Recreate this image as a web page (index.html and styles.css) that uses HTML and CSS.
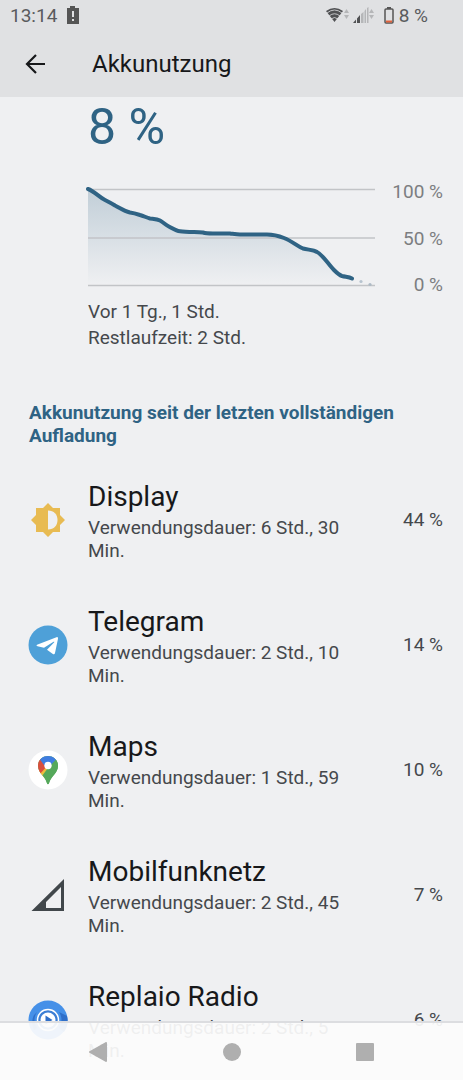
FILE: index.html
```
<!DOCTYPE html>
<html lang="de">
<head>
  <meta charset="UTF-8">
  <meta name="viewport" content="width=device-width, initial-scale=1.0">
  <title>Akkunutzung</title>
  <link rel="stylesheet" href="styles.css">
</head>
<body>
  <header class="header">
    <div class="status-bar">
      <span>13:14</span>
      <svg class="battery-alert" width="12" height="18" viewBox="0 0 12 18">
        <path d="M3 0h5v2h4v16H0V2h3z" fill="#555"/>
        <path d="M5 5h2v6H5zM5 13h2v2H5z" fill="#e0e1e3"/>
      </svg>
      <div class="status-icons">
        <svg width="23" height="16" viewBox="0 0 23 16">
          <path d="M0 4Q8.500-2 17 4L8.500 15z" fill="#505153"/>
          <path d="M1 6Q8.500 0 16 6M3 9Q8.500 4.500 14 9M5 12Q8.500 9 12 12" fill="none" stroke="#e0e1e3" stroke-width=".8"/>
          <path d="M18 6l2.500-4L23 6zM18 8h5l-2.500 4z" fill="#b5b6b8"/>
        </svg>
        <svg class="signal" width="21" height="16" viewBox="0 0 21 16">
          <path d="M0 16l3-3.500V16zM4 11.500l3-3.500v8H4z" fill="#505153"/>
          <path d="M8 7l2.500-2v11H8zM11.500 4L13 2v14h-1.500zM14 1l1.500-1v16H14zM16 6l2.500-4L21 6zM16 8h5l-2.500 4z" fill="#b5b6b8"/>
        </svg>
        <svg class="battery" width="10" height="17" viewBox="0 0 10 17">
          <path d="M3 0h4v2H3z" fill="#555"/>
          <rect x="1" y="2" width="8" height="14" rx="1" fill="none" stroke="#555" stroke-width="1.500"/>
          <path d="M2 13.500h6v2H2z" fill="#e2623c"/>
        </svg>
        <span>8 %</span>
      </div>
    </div>
    <div class="app-bar">
      <button class="back" type="button" aria-label="Zurück">
        <svg width="22" height="20" viewBox="0 0 22 20">
          <path d="M21 10H3M12 1L3 10l9 9" fill="none" stroke="#17181a" stroke-width="2.200"/>
        </svg>
      </button>
      <h1>Akkunutzung</h1>
    </div>
  </header>

  <main>
    <section class="battery-level">
      <div class="level">8 %</div>
      <div class="chart">
        <svg class="graph" viewBox="0 0 287 115" role="img" aria-label="Akkuverlauf">
          <defs>
            <linearGradient id="fade" x1="0" y1="0" x2="0" y2="1">
              <stop offset="0" stop-color="#2f6384" stop-opacity=".24"/>
              <stop offset="1" stop-color="#2f6384" stop-opacity="0"/>
            </linearGradient>
          </defs>
          <path d="M0 8L17 19L42 31L72 39L92 50L125 52L179 53L189 55L200 59L215 68L229 71L249 92L264 97L264 104H0z" fill="url(#fade)"/>
          <path d="M0 8.500H287M0 57H287M0 104.500H287" stroke="#c2c4c7" stroke-width="1.300"/>
          <path d="M0 8C6 10 11 16 17 19C21 21 23 22 27 24.500C32 27 36 30 42 31.500C46 32 49 33 52 34C56 35 58 36.500 62 37.500C66 38 69 38 72 39.500C75 41 77 43.500 80 45C84 47 88 50 92 50.200C98 51 106 51 115 51.500C118 52.500 122 52.500 125 52.500H142C146 53 149 53.500 152 53.500H179C185 53.500 191 55 196 57C204 60 209 65 215 67.500C220 69 225 68.500 229 71C235 74 240 83 246 89C249 92 251 94 254 95C258 96 261 96 264 97.500" fill="none" stroke="#2f6384" stroke-width="4" stroke-linecap="round"/>
          <circle cx="273" cy="100.500" r="1.600" fill="#b7c4cf"/>
          <circle cx="282" cy="103.500" r="1.600" fill="#aebac5"/>
        </svg>
        <div class="scale">
          <span>100 %</span>
          <span>50 %</span>
          <span>0 %</span>
        </div>
      </div>
      <p>Vor 1 Tg., 1 Std.</p>
      <p>Restlaufzeit: 2 Std.</p>
    </section>

    <h2>Akkunutzung seit der letzten vollständigen Aufladung</h2>

    <ul class="usage">
      <li>
        <svg class="icon" viewBox="0 0 40 40">
          <path d="M20 3l5 5h7v7l5 5-5 5v7h-7l-5 5-5-5H8v-7l-5-5 5-5V8h7z" fill="#e8bb52"/>
          <path d="M20 10.500c6 0 9.500 4 9.500 9.500S26 29.500 20 29.500z" fill="#eff0f2"/>
        </svg>
        <div class="info">
          <h3>Display</h3>
          <p>Verwendungsdauer: 6 Std., 30 Min.</p>
        </div>
        <span class="percent">44 %</span>
      </li>
      <li>
        <svg class="icon" viewBox="0 0 40 40">
          <circle cx="20" cy="20" r="19.500" fill="#4ea0d8"/>
          <path d="M9 19.700L28.500 12.200Q30.300 11.700 30 13.700L27 28Q26.500 30 24.500 28.700L19 24.700L26 17.500Q27 16.300 25.500 16.800L16 22.800L9.500 21.200Q7.500 20.400 9 19.700z" fill="#fff"/>
        </svg>
        <div class="info">
          <h3>Telegram</h3>
          <p>Verwendungsdauer: 2 Std., 10 Min.</p>
        </div>
        <span class="percent">14 %</span>
      </li>
      <li>
        <svg class="icon" viewBox="0 0 40 40">
          <defs>
            <clipPath id="pin">
              <path d="M20 6c-5.600 0-10 4.200-10 9.700 0 4.300 2.300 7.200 5 10.400 2.300 2.700 3.300 5 4 7.200.4 1.400 1.600 1.400 2 0 .7-2.200 1.700-4.500 4-7.200 2.700-3.200 5-6.100 5-10.400C30 10.200 25.600 6 20 6z"/>
            </clipPath>
          </defs>
          <circle cx="20" cy="20" r="19.500" fill="#fff"/>
          <g clip-path="url(#pin)">
            <path d="M8 4h24v32H8z" fill="#55a85a"/>
            <path d="M8 22l8-7 7 4-9 11-8-2z" fill="#efbd3e"/>
            <path d="M11 8l9 7-8 9-5-1V9z" fill="#d94f3d"/>
            <path d="M11.500 9L15 4h11l3 6-10 9z" fill="#3f7de0"/>
            <path d="M28.500 9L20 18l-6 8 5 9 14-12V9z" fill="#55a85a"/>
          </g>
          <circle cx="20" cy="15.500" r="3.700" fill="#fff"/>
        </svg>
        <div class="info">
          <h3>Maps</h3>
          <p>Verwendungsdauer: 1 Std., 59 Min.</p>
        </div>
        <span class="percent">10 %</span>
      </li>
      <li>
        <svg class="icon" viewBox="0 0 40 40">
          <path d="M36 4v32H3.500zM33 12L18 27v6h15z" fill="#41474b" fill-rule="evenodd"/>
        </svg>
        <div class="info">
          <h3>Mobilfunknetz</h3>
          <p>Verwendungsdauer: 2 Std., 45 Min.</p>
        </div>
        <span class="percent">7 %</span>
      </li>
      <li>
        <svg class="icon" viewBox="0 0 40 40">
          <circle cx="20" cy="20" r="19.500" fill="#4590e8"/>
          <path d="M31 12a14 14 0 0 1 0 16l5 4a19.500 19.500 0 0 0 3-16zM9 12a14 14 0 0 0 0 16l-3 2a17 17 0 0 1 0-15z" fill="#2f6fc9"/>
          <circle cx="20" cy="20" r="10.500" fill="#3c7ed4" stroke="#fff" stroke-width="1.500"/>
          <circle cx="20" cy="20" r="7.500" fill="#fff"/>
          <path d="M17.500 15.500v9l7-4.500z" fill="#2f6fc9"/>
        </svg>
        <div class="info">
          <h3>Replaio Radio</h3>
          <p>Verwendungsdauer: 2 Std., 5 Min.</p>
        </div>
        <span class="percent">6 %</span>
      </li>
    </ul>
  </main>

  <nav class="nav-bar">
    <button type="button" aria-label="Zurück">
      <svg width="20" height="20" viewBox="0 0 20 20"><path d="M18 1v18L2 10z" fill="#afafaf" stroke="#afafaf" stroke-width="2" stroke-linejoin="round"/></svg>
    </button>
    <button type="button" aria-label="Startseite">
      <svg width="20" height="20" viewBox="0 0 20 20"><circle cx="10" cy="10" r="9" fill="#afafaf"/></svg>
    </button>
    <button type="button" aria-label="Übersicht">
      <svg width="20" height="20" viewBox="0 0 20 20"><rect x="1" y="1" width="18" height="18" rx="1" fill="#afafaf"/></svg>
    </button>
  </nav>
</body>
</html>
```
FILE: styles.css
```
* {
  box-sizing: border-box;
}
html {
  scrollbar-width: none;
}
body {
  margin: 0;
  font-family: Roboto, sans-serif;
  font-size: 19px;
  background-color: #eff0f2;
  color: #45484c;
}
h1, h2, h3, p, ul {
  margin: 0;
  padding: 0;
  font-weight: normal;
}
svg {
  display: block;
}
button {
  padding: 0;
  border: none;
  background: none;
  cursor: pointer;
}
.header {
  position: sticky;
  top: 0;
  background-color: #e0e1e3;
}
.status-bar {
  display: flex;
  align-items: center;
  height: 30px;
  padding: 0 35px 0 10px;
  color: #5a5b5d;
}
.battery-alert {
  margin-left: 10px;
}
.status-icons {
  display: flex;
  align-items: center;
  margin-left: auto;
}
.signal {
  margin-left: 4px;
}
.battery {
  margin: 0 5px 0 10px;
}
.app-bar {
  display: flex;
  align-items: center;
  height: 67px;
  padding: 0 24px;
}
.back {
  width: 68px;
}
h1 {
  font-size: 24px;
  color: #17181a;
}
.battery-level {
  padding: 0 20px 0 88px;
}
.battery-level p {
  line-height: 26px;
}
.level {
  margin-bottom: 24px;
  font-size: 50px;
  line-height: 60px;
  color: #2f6384;
}
.chart {
  display: flex;
  margin-bottom: 3px;
}
.graph {
  flex: 1;
  min-width: 0;
  overflow: visible;
}
.scale {
  display: flex;
  flex-direction: column;
  justify-content: space-between;
  width: 68px;
  line-height: 22px;
  text-align: right;
  color: #7c7e81;
}
h2 {
  padding: 50px 29px 12px;
  font-size: 19px;
  font-weight: 700;
  line-height: 23px;
  color: #2f6384;
}
.usage {
  list-style: none;
}
.usage li {
  display: flex;
  align-items: center;
  padding: 20px 20px 24px 28px;
}
.icon {
  flex: none;
  width: 40px;
  height: 40px;
  margin-right: 20px;
}
.info {
  flex: 1;
  padding-top: 2px;
  margin-bottom: -2px;
}
h3 {
  margin-bottom: 3px;
  font-size: 28px;
  line-height: 32px;
  color: #17181a;
}
.info p {
  line-height: 23px;
}
.percent {
  width: 80px;
  text-align: right;
}
.nav-bar {
  position: fixed;
  right: 0;
  bottom: 0;
  left: 0;
  display: flex;
  justify-content: space-between;
  height: 59px;
  padding: 0 88px;
  border-top: 2px solid #dcdde0;
  background-color: rgba(252, 252, 252, 0.93);
}
```
